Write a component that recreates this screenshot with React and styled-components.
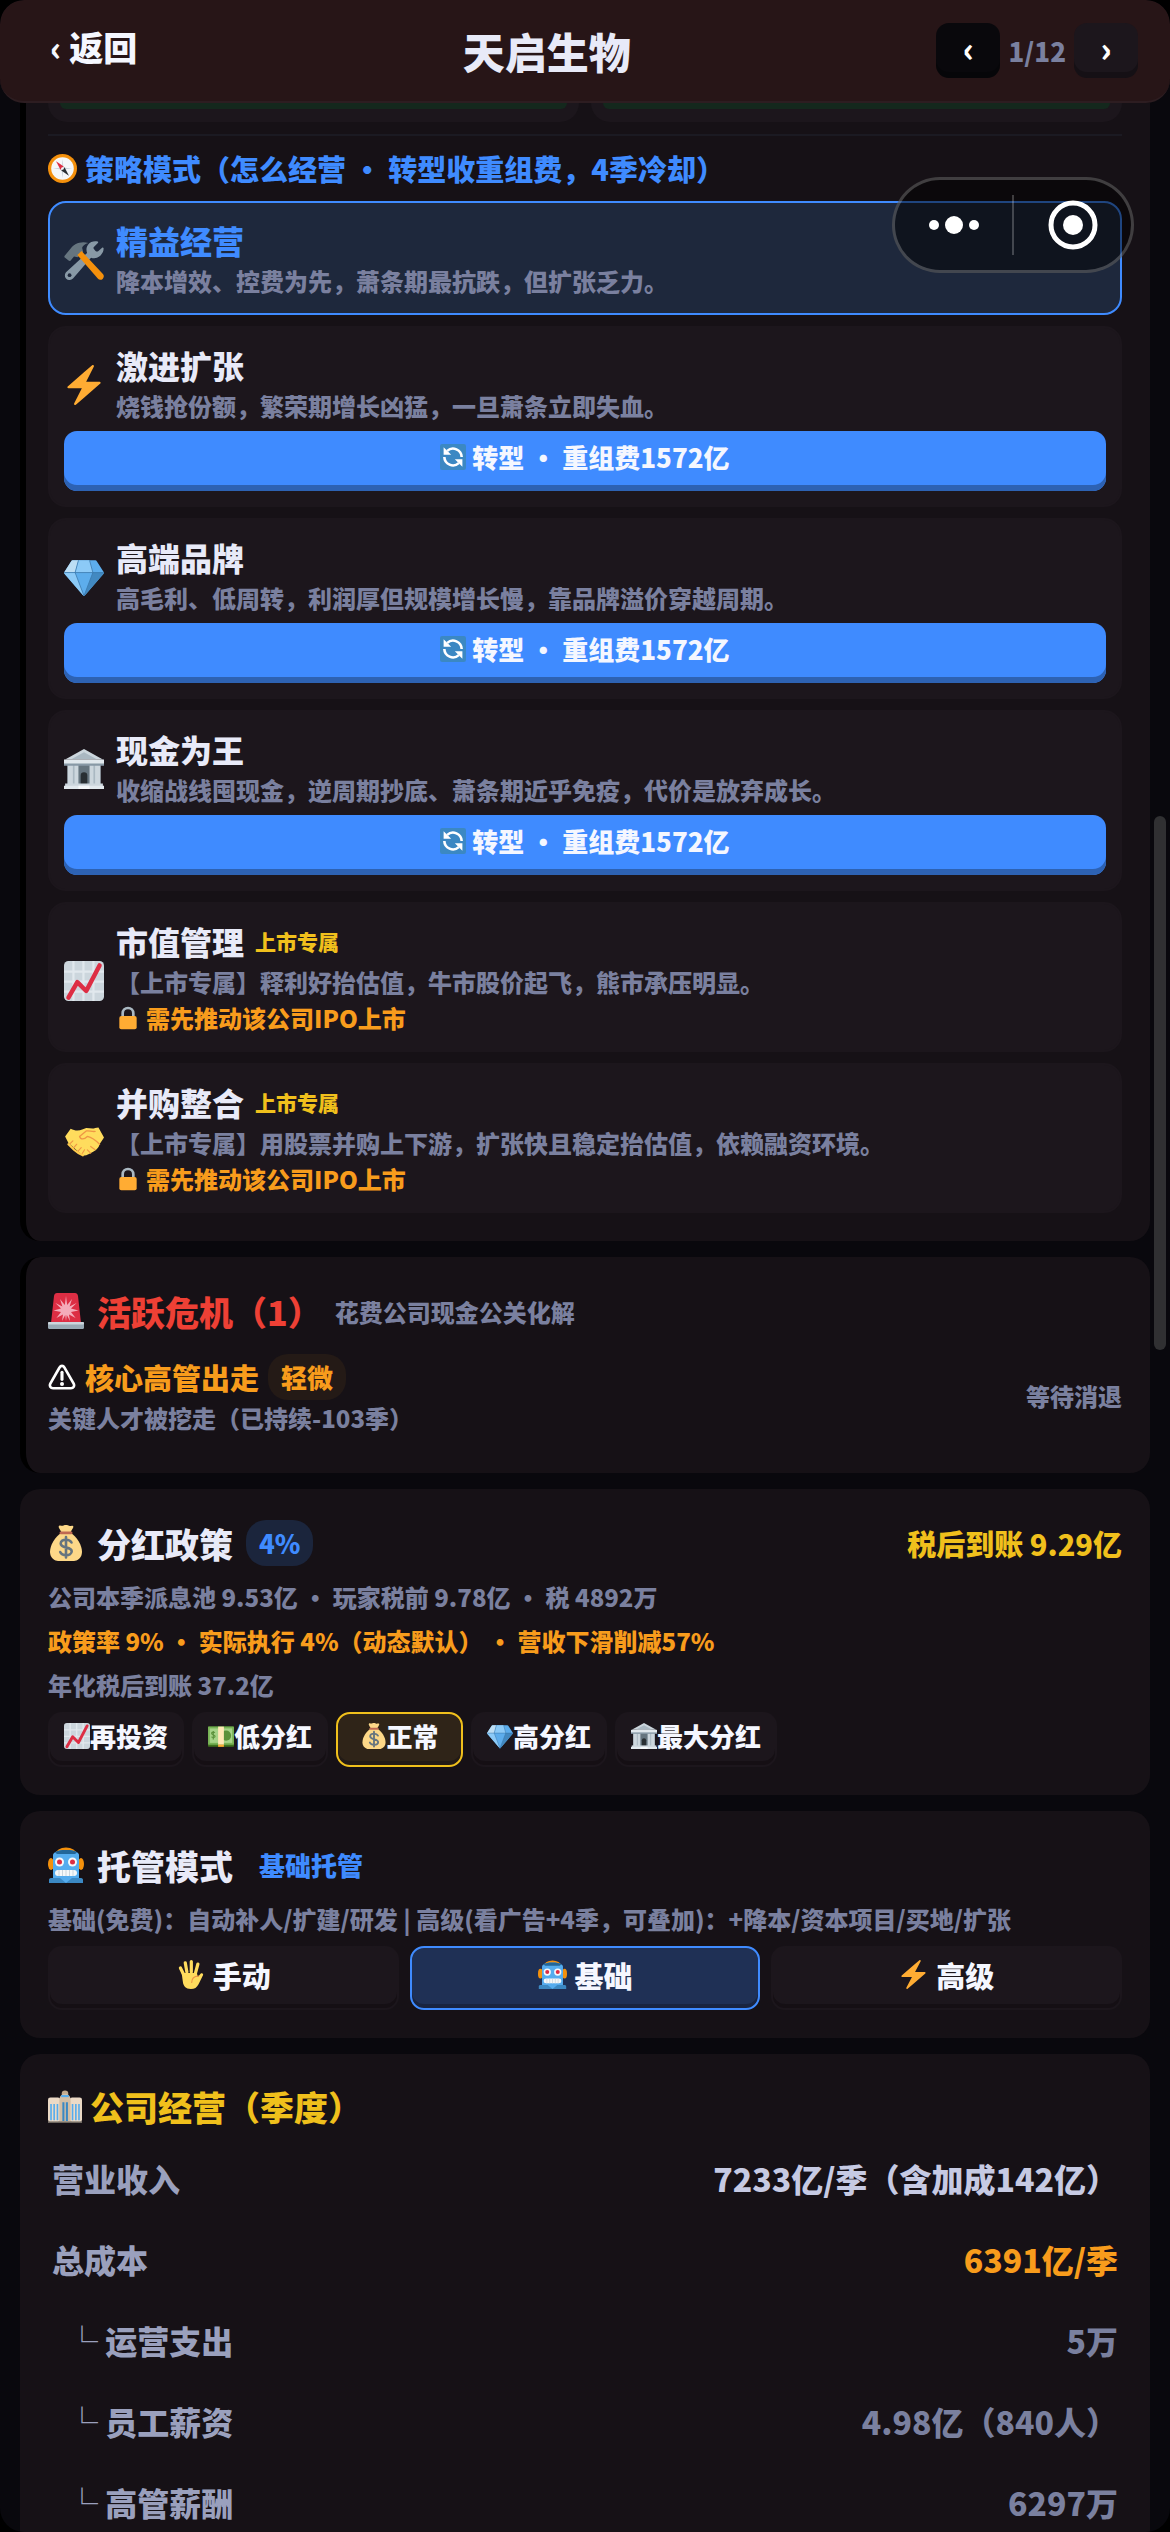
import React from "react";
import styled, { createGlobalStyle, css } from "styled-components";

const c = {
  page: "#09080d",
  card: "#161116",
  tile: "#1c161c",
  text: "#e8eaf8",
  label: "#9aa0bd",
  value: "#c6cae3",
  muted: "#7a809f",
  blue: "#3f8bff",
  orange: "#f89c1c",
  yellow: "#f0c01c",
  red: "#ee4035",
};

const Global = createGlobalStyle`
  *, *::before, *::after { box-sizing: border-box; }
  body {
    margin: 0;
    background: #000;
    color: ${c.text};
    font-family: "Noto Sans CJK SC", "Noto Sans CJK TC", sans-serif;
    font-weight: 900;
  }
  h1, h2, h3, p, dl, dd, ul { margin: 0; padding: 0; font-size: inherit; font-weight: inherit; }
  ul { list-style: none; }
  button { font: inherit; color: inherit; border: 0; margin: 0; padding: 0; cursor: pointer; }
`;

/* ---------- icons ---------- */

const Svg = styled.svg`
  display: block;
  flex: none;
  width: ${(p) => p.$size}px;
  height: ${(p) => p.$size}px;
`;

const drawings = {
  compass: (
    <>
      <circle cx="18" cy="18" r="18" fill="#f4900c" />
      <circle cx="18" cy="18" r="14" fill="#f5f8fa" />
      <path d="M18 6l1.200 10.800L30 18l-10.800 1.200L18 30l-1.200-10.800L6 18l10.800-1.200z" fill="#ccd6dd" />
      <path d="M10 9l9.500 6.500-4 4z" fill="#dd2e44" />
      <path d="M26 27l-9.500-6.500 4-4z" fill="#292f33" />
      <circle cx="18" cy="18" r="1.600" fill="#f5f8fa" />
    </>
  ),
  tools: (
    <>
      <path d="M35.6 7.2c-.2-.6-.9-.7-1.300-.3l-3.600 3.200c-.6.500-1.700.400-2.300-.2l-1.500-1.700c-.5-.6-.5-1.600.2-2.200L30.500 2.700c.5-.4.400-1.100-.2-1.300-3-.9-6.500.1-8.500 2.600-1.800 2.200-2 5.100-1 7.600L2.300 28.600C.4 30.300.3 33.100 2 34.800c1.700 1.700 4.400 1.600 6.100-.2L24.300 15.900c2.600.9 5.500.6 7.700-1.200 2.500-1.900 3.900-4.700 3.600-7.500z" fill="#8899a6" />
      <circle cx="5" cy="31.700" r="1.700" fill="#1e283c" />
      <path d="M.6 14.200L6 7.600C9 3.700 14.500.6 22 2.600c-3.200.8-5 2.400-5.700 4.400l1 4-5 4.600-3.300-.8-3 3.600c-.6.6-1.300.6-1.900.1l-3.400-2.700c-.5-.4-.5-1-.1-1.600z" fill="#66757f" />
      <path d="M12 13.500L15.800 10 35 30.600c1.200 1.300 1.100 3.300-.2 4.400s-3.300 1-4.400-.3z" fill="#f4900c" />
    </>
  ),
  zap: (
    <path
      d="M32.938 15.651C32.792 15.26 32.418 15 32 15H19.925L26.89 1.458c.219-.426.106-.947-.271-1.243C26.437.071 26.218 0 26 0c-.233 0-.466.082-.653.243L18 6.588 3.347 19.243c-.316.273-.43.714-.284 1.105S3.582 21 4 21h12.075L9.11 34.542c-.219.426-.106.947.271 1.243.182.144.401.215.619.215.233 0 .466-.082.653-.243L18 29.412l14.653-12.655c.317-.273.43-.714.285-1.106z"
      fill="#ffac33"
    />
  ),
  gem: (
    <>
      <path d="M.3 13.500L6.500 3.800C6.800 3.300 7.200 3 7.800 3h20.400c.6 0 1 .3 1.300.8l6.200 9.700c.3.500.3 1-.1 1.500L18.700 34.600c-.4.500-1 .5-1.400 0L.4 15c-.4-.5-.4-1-.1-1.500z" fill="#5dadec" />
      <path d="M.1 14L6.500 3.800C6.800 3.300 7.200 3 7.800 3H13l-3 11z" fill="#bddef4" />
      <path d="M13 3h10l3 11H10z" fill="#8ccaf7" />
      <path d="M.1 14H10l8 21c-.3 0-.5-.2-.7-.4L.4 15z" fill="#8ccaf7" />
      <path d="M35.900 14H26l-8 21c.3 0 .5-.2.700-.4L35.600 15z" fill="#4289c1" />
      <path d="M.2 14h35.600M13 3l-3 11 8 21 8-21-3-11" fill="none" stroke="#3a78ab" strokeWidth=".7" />
    </>
  ),
  bank: (
    <>
      <path d="M3 13h30v19H3z" fill="#aab8c2" />
      <path d="M12.500 14h11v18h-11z" fill="#66757f" />
      <path d="M15 32v-8a3 3 0 0 1 6 0v8z" fill="#292f33" />
      <path d="M3.500 14H8v18H3.500zM9.500 14H13v18H9.500zM23 14h3.500v18H23zM28 14h4.500v18H28z" fill="#ccd6dd" />
      <path d="M18 0l17 9.500H1z" fill="#ccd6dd" />
      <path d="M18 3l11 6H7z" fill="#aab8c2" />
      <path d="M0 9.500h36v4.500H0z" fill="#e1e8ed" />
      <path d="M0 13h36v2H0z" fill="#8899a6" />
      <path d="M1 31h34v2.500H1z" fill="#ccd6dd" />
      <path d="M0 33h36v3H0z" fill="#e1e8ed" />
      <path d="M13 33h10v3H13z" fill="#f5f8fa" />
    </>
  ),
  chart: (
    <>
      <rect width="36" height="36" rx="4" fill="#ccd6dd" />
      <path d="M8.500 0v36M17.500 0v36M26.500 0v36M0 9.500h36M0 18.500h36M0 27.500h36" stroke="#e1e8ed" strokeWidth="2" />
      <path d="M4 33l8-14 8 8L32 4" fill="none" stroke="#dd2e44" strokeWidth="4" strokeLinecap="round" strokeLinejoin="round" />
    </>
  ),
  handshake: (
    <>
      <path d="M1 13l5-7c4 2 7 2 11 .5l3-1c3 0 6 1 8 0l3-.5 5 9-4 6c-1 5-6 7-10 9-3 1.500-5 1.500-7-.500L4 19z" fill="#ffdc5d" />
      <path d="M14 13l6-5c3-.5 5 1 8 .5M14 13c1 3 4 3 7 0 4 1 8 4 11 7" fill="none" stroke="#ef9645" strokeWidth="1.200" strokeLinecap="round" strokeLinejoin="round" />
      <path d="M5 20l3-3M8 24l3.500-4M12 27l3.500-4M16 29l2.500-4M24 22l4 3M21 25l3 3" stroke="#ef9645" strokeWidth="1" strokeLinecap="round" />
      <path d="M4 20l5 5 4 3 4 2" fill="none" stroke="#ffcc4d" strokeWidth="2" strokeLinecap="round" />
    </>
  ),
  lock: (
    <>
      <path d="M10 17v-6a8 8 0 0 1 16 0v6" fill="none" stroke="#aab8c2" strokeWidth="4" />
      <rect x="5" y="15" width="26" height="20" rx="3" fill="#ffac33" />
    </>
  ),
  siren: (
    <>
      <path d="M6 3c.2-2 1.500-3 3-3h18c1.500 0 2.800 1 3 3l3 27H3z" fill="#dd2e44" />
      <path d="M18 3l1.200 9L24 6l-2.400 7.500 7-3.500-5.600 5.600 7.500 1.900-7.500 1.500 4.600 6-6.600-3.500L22 28l-3.200-6L18 28l-.8-6L14 28l1-6.500L8.400 25l4.600-6-7.500-1.500 7.500-1.900L7.400 10l7 3.500L12 6l4.800 6z" fill="#f4abba" />
      <rect y="29" width="36" height="7" rx="1.500" fill="#99aab5" />
      <rect y="29" width="36" height="2.500" rx="1" fill="#ccd6dd" />
    </>
  ),
  warning: (
    <>
      <path d="M15 5.500c1.300-2.300 4.700-2.300 6 0l12 21c1.500 3-.3 6-3.500 6h-23c-3.200 0-5-3-3.500-6z" fill="none" stroke="#fff" strokeWidth="3.400" />
      <path d="M18 12v9" stroke="#fff" strokeWidth="4" strokeLinecap="round" />
      <circle cx="18" cy="27" r="2.600" fill="#fff" />
    </>
  ),
  moneybag: (
    <>
      <path d="M11 1c1-1.500 3 .5 4.500-.5C17-.4 19-.3 20.500.6 22 1.500 24 0 25 1c1.500 1-2.500 5-3 8h-8c-.5-3-4.500-7-3-8z" fill="#fdd888" />
      <path d="M13 8h10c6 4 11 12 11 19 0 6-5 9-8 9H10c-3 0-8-3-8-9 0-7 5-15 11-19z" fill="#fdd888" />
      <rect x="11.500" y="6.500" width="13" height="2.800" rx="1.400" fill="#bf6952" />
      <path d="M23.500 17.500c-1-2-3-2.800-5.500-2.800-3 0-5.300 1.300-5.300 3.800 0 5.500 11 2.800 11 7.800 0 2.500-2.500 3.900-5.500 3.900-2.700 0-5-.9-6-3.200M18 12v20.500" fill="none" stroke="#67757f" strokeWidth="2.600" strokeLinecap="round" />
    </>
  ),
  banknote: (
    <>
      <rect y="5" width="36" height="28" rx="1" fill="#3e721d" />
      <rect y="5" width="36" height="25" rx="1" fill="#77b255" />
      <rect x="2.500" y="7.500" width="31" height="20" fill="#a6d388" />
      <circle cx="25" cy="17.500" r="7" fill="#5c913b" />
      <path d="M9.500 13.500c-1-1.300-4.500-1.400-4.500.7 0 2.600 4.800 1.400 4.800 4.200 0 2.200-3.800 2.200-5 .6M7.300 11v12" fill="none" stroke="#5c913b" strokeWidth="1.600" />
      <path d="M14 5h8v25h-8z" fill="#ffe8b6" />
      <path d="M14 30h8v3h-8z" fill="#ffac33" />
    </>
  ),
  robot: (
    <>
      <ellipse cx="18" cy="7" rx="10.500" ry="6.500" fill="#f4900c" />
      <ellipse cx="3" cy="17" rx="3" ry="6" fill="#f4900c" />
      <ellipse cx="33" cy="17" rx="3" ry="6" fill="#f4900c" />
      <path d="M5 8c0-3 6-5 13-5s13 2 13 5v23H5z" fill="#55acee" />
      <path d="M7 5.500C9 3.500 13 3 18 3s9 .5 11 2.500L27 7H9z" fill="#226699" />
      <path d="M1 33c0-1.500 1-2 3-2h28c2 0 3 .5 3 2v3H1z" fill="#3b88c3" />
      <path d="M12 31h12l-6 5z" fill="#55acee" />
      <circle cx="11.500" cy="15" r="4.500" fill="#f5f8fa" />
      <circle cx="24.500" cy="15" r="4.500" fill="#f5f8fa" />
      <circle cx="11.500" cy="15" r="2.500" fill="#dd2e44" />
      <circle cx="24.500" cy="15" r="2.500" fill="#dd2e44" />
      <rect x="7" y="23" width="22" height="6" rx="3" fill="#f5f8fa" />
      <path d="M11 23v6M14.500 23v6M18 23v6M21.500 23v6M25 23v6" stroke="#ccd6dd" strokeWidth="1" />
    </>
  ),
  hand: (
    <>
      <path d="M9 17L5.500 10M13.500 15L11.500 3.500M19 15V2M24 17l3.200-12" stroke="#ffdc5d" strokeWidth="4" strokeLinecap="round" />
      <path d="M7 16h19l1 5 3.500-4c1.500-1.500 4 0 3 2L28 30c-2 4-5 6-9.500 6C12 36 9 32 8.500 27z" fill="#ffdc5d" />
      <path d="M28 20c-5 0-8.500 3-8.500 8" fill="none" stroke="#ef9645" strokeWidth="1.400" strokeLinecap="round" />
    </>
  ),
  refresh: (
    <>
      <rect width="36" height="36" rx="3" fill="#3b88c3" />
      <path d="M10 9.500a12 12 0 0 1 20 8.500M26 26.500A12 12 0 0 1 6 18" fill="none" stroke="#fff" strokeWidth="3.600" />
      <path d="M5 4.500v10.500h10.500zM31 31.500V21H20.500z" fill="#fff" />
    </>
  ),
  city: (
    <>
      <circle cx="18" cy="5" r="3.500" fill="#c1a98e" />
      <rect x="0" y="9" width="13" height="26" rx="2.500" fill="#ecdac6" />
      <rect x="23" y="9" width="13" height="26" rx="2.500" fill="#ecdac6" />
      <path d="M12 35V13c0-6 2.500-8 6-8s6 2 6 8v22z" fill="#d3bea5" />
      <path d="M14 7.500h8" stroke="#55acee" strokeWidth="2.200" />
      <path d="M3.200 16v17M6.500 16v17M10 16v17M26 16v17M29.500 16v17M32.800 16v17" stroke="#55acee" strokeWidth="1.700" />
      <path d="M16.300 14v20M20 14v20" stroke="#3b88c3" strokeWidth="2.200" />
      <path d="M0 35h36" stroke="#8b8378" strokeWidth="1.500" />
    </>
  ),
};

const Icon = ({ name, size }) => (
  <Svg $size={size} viewBox="0 0 36 36" aria-hidden="true">
    {drawings[name]}
  </Svg>
);

/* ---------- shell ---------- */

const Shell = styled.div`
  position: relative;
  display: flex;
  flex-direction: column;
  height: 100vh;
  overflow: hidden;
  border-radius: 24px;
  background: ${c.page};
`;

const Header = styled.header`
  flex: none;
  display: flex;
  align-items: center;
  justify-content: space-between;
  padding: 23px 32px;
  border-bottom: 2px solid #2d1d21;
  border-radius: 24px;
  background: #271517;
`;

const BackButton = styled.button`
  height: 55px;
  padding: 0 20px 8px 18px;
  background: none;
  color: #f5f7ff;
  font-size: 34px;
  line-height: 47px;
`;

const Title = styled.h1`
  font-size: 42px;
  line-height: 55px;
`;

const Pager = styled.nav`
  display: flex;
  align-items: center;
  gap: 8px;
  color: ${c.muted};
  font-size: 26px;
  line-height: 40px;
`;

const PagerButton = styled.button`
  width: 64px;
  height: 55px;
  padding-bottom: 6px;
  border-radius: 13px;
  background: ${(p) => (p.$dim ? "#09080c" : c.tile)};
  box-shadow: inset 0 -6px 0 rgba(0, 0, 0, 0.25);
  color: #fff;
  font-size: 34px;
  line-height: 48px;
`;

const Main = styled.main`
  flex: 1;
  min-height: 0;
  display: flex;
  flex-direction: column;
  gap: 16px;
  padding: 0 20px;
  overflow-y: auto;
  scrollbar-width: none;
`;

const Card = styled.section`
  flex: none;
  padding: 28px;
  border-radius: 20px;
  background: ${c.card};
  ${(p) => p.$edge && css`
    padding-left: 22px;
    border-left: 6px solid #000;
  `}
  ${(p) => p.$continued && css`
    padding-top: 0;
    border-top-left-radius: 0;
    border-top-right-radius: 0;
  `}
`;

/* ---------- strategy ---------- */

const Stubs = styled.div`
  display: grid;
  grid-template-columns: 1fr 1fr;
  gap: 12px;
  padding-bottom: 12px;
  border-bottom: 2px solid #1b1a22;
`;

const Stub = styled.div`
  height: 19px;
  padding: 0 12px;
  border-radius: 0 0 20px 20px;
  background: ${c.tile};
  &::before {
    content: "";
    display: block;
    height: 6px;
    border-radius: 0 0 12px 12px;
    background: #14281d;
  }
`;

const SectionTitle = styled.h2`
  display: flex;
  align-items: center;
  gap: 8px;
  padding: 10px 0 11px;
  color: ${c.blue};
  font-size: 29px;
  line-height: 44px;
`;

const StrategyList = styled.ul`
  display: flex;
  flex-direction: column;
  gap: 11px;
`;

const Strategy = styled.li`
  padding: 14px;
  border: 2px solid ${(p) => (p.$active ? c.blue : c.tile)};
  border-radius: 18px;
  background: ${(p) => (p.$active ? "#1e283c" : c.tile)};
`;

const StrategyHead = styled.div`
  display: flex;
  align-items: center;
  gap: 12px;
  & > svg {
    margin-top: ${(p) => (p.$locked ? 8 : 4)}px;
  }
`;

const StrategyName = styled.h3`
  display: flex;
  align-items: center;
  gap: 11px;
  color: ${(p) => (p.$active ? c.blue : c.text)};
  font-size: 32px;
  line-height: 46px;
`;

const Tag = styled.span`
  color: ${c.yellow};
  font-size: 21px;
`;

const Note = styled.p`
  color: ${(p) => p.$color || c.muted};
  font-size: 24px;
  line-height: ${(p) => (p.$loose ? 44 : 36)}px;
`;

const LockNote = styled(Note)`
  display: flex;
  align-items: center;
  gap: 6px;
`;

const SwitchButton = styled.button`
  display: flex;
  align-items: center;
  justify-content: center;
  gap: 6px;
  width: 100%;
  height: 60px;
  margin-top: 7px;
  padding-bottom: 8px;
  border-radius: 13px;
  background: ${c.blue};
  box-shadow: inset 0 -6px 0 #2d62b3;
  color: #f5f7ff;
  font-size: 26px;
  line-height: 52px;
`;

/* ---------- shared card pieces ---------- */

const Heading = styled.h2`
  display: flex;
  align-items: center;
  gap: ${(p) => (p.$tight ? 8 : 13)}px;
  height: ${(p) => (p.$tight ? 48 : 52)}px;
  margin-bottom: ${(p) => (p.$tight ? 8 : 6)}px;
  color: ${(p) => p.$color || c.text};
  font-size: 34px;
`;

const Aside = styled.span`
  color: ${c.muted};
  font-size: 24px;
`;

const Badge = styled.span`
  padding: 0 13px;
  border-radius: 20px;
  background: ${(p) => p.$bg || "none"};
  color: ${(p) => p.$color};
  font-size: 26px;
  line-height: 46px;
`;

const Amount = styled.span`
  margin-left: auto;
  color: ${c.yellow};
  font-size: 29px;
`;

const CrisisRow = styled.div`
  display: flex;
  align-items: center;
  justify-content: space-between;
  padding: 11px 0 9px;
`;

const CrisisName = styled.h3`
  display: flex;
  align-items: center;
  gap: 9px;
  color: ${c.orange};
  font-size: 29px;
  line-height: 46px;
`;

const Options = styled.div`
  display: flex;
  gap: 8px;
  margin-top: 5px;
`;

const optionColors = {
  plain: css`
    border-color: transparent;
    background: linear-gradient(${c.tile} 0 0) border-box;
    box-shadow: inset 0 -4px 0 #150f14;
  `,
  gold: css`
    border-color: ${c.yellow};
    background: #2f2418;
    box-shadow: inset 0 -4px 0 #231b16;
  `,
  blue: css`
    border-color: ${c.blue};
    background: #1f3055;
    box-shadow: inset 0 -4px 0 #192440;
  `,
};

const Option = styled.button`
  display: flex;
  align-items: center;
  justify-content: center;
  min-width: 127px;
  height: 55px;
  padding: 0 14px 7px;
  border: 2px solid;
  border-radius: 14px;
  color: #f5f7ff;
  font-size: 26px;
  line-height: 44px;
  ${(p) => optionColors[p.$tone || "plain"]}
`;

const Modes = styled(Options)`
  gap: 11px;
`;

const Mode = styled(Option)`
  flex: 1;
  gap: 8px;
  height: 64px;
  font-size: 29px;
`;

const Ledger = styled.dl`
  padding: 0 4px;
`;

const LedgerRow = styled.div`
  display: flex;
  justify-content: space-between;
  padding-left: ${(p) => (p.$child ? 14 : 0)}px;
  font-size: 32px;
  line-height: 81px;
`;

const Term = styled.dt`
  color: ${c.label};
`;

const Figure = styled.dd`
  color: ${(p) => p.$color || c.muted};
`;

/* ---------- overlays ---------- */

const Capsule = styled.div`
  position: absolute;
  top: 177px;
  right: 36px;
  display: grid;
  grid-template-columns: 1fr 2px 1fr;
  align-items: center;
  justify-items: center;
  width: 242px;
  height: 96px;
  border: 3px solid rgba(255, 255, 255, 0.22);
  border-radius: 48px;
  background: rgba(0, 0, 0, 0.5);
`;

const CapsuleButton = styled.button`
  background: none;
`;

const CapsuleLine = styled.span`
  width: 2px;
  height: 60px;
  background: rgba(255, 255, 255, 0.22);
`;

const CapsuleArt = styled.svg`
  display: block;
  width: 52px;
  height: 52px;
  fill: #fff;
`;

const ScrollThumb = styled.div`
  position: absolute;
  top: 816px;
  right: 4px;
  width: 12px;
  height: 534px;
  border-radius: 6px;
  background: #303032;
`;

/* ---------- data ---------- */

const strategies = [
  { icon: "tools", name: "精益经营", note: "降本增效、控费为先，萧条期最抗跌，但扩张乏力。", active: true },
  { icon: "zap", name: "激进扩张", note: "烧钱抢份额，繁荣期增长凶猛，一旦萧条立即失血。", cost: "1572亿" },
  { icon: "gem", name: "高端品牌", note: "高毛利、低周转，利润厚但规模增长慢，靠品牌溢价穿越周期。", cost: "1572亿" },
  { icon: "bank", name: "现金为王", note: "收缩战线囤现金，逆周期抄底、萧条期近乎免疫，代价是放弃成长。", cost: "1572亿" },
  { icon: "chart", name: "市值管理", note: "【上市专属】释利好抬估值，牛市股价起飞，熊市承压明显。", locked: true },
  { icon: "handshake", name: "并购整合", note: "【上市专属】用股票并购上下游，扩张快且稳定抬估值，依赖融资环境。", locked: true },
];

const dividends = [
  { icon: "chart", label: "再投资" },
  { icon: "banknote", label: "低分红" },
  { icon: "moneybag", label: "正常", tone: "gold" },
  { icon: "gem", label: "高分红" },
  { icon: "bank", label: "最大分红" },
];

const modes = [
  { icon: "hand", label: "手动" },
  { icon: "robot", label: "基础", tone: "blue" },
  { icon: "zap", label: "高级" },
];

const ledger = [
  { term: "营业收入", value: "7233亿/季（含加成142亿）", color: c.value },
  { term: "总成本", value: "6391亿/季", color: c.orange },
  { term: "└ 运营支出", value: "5万", child: true },
  { term: "└ 员工薪资", value: "4.98亿（840人）", child: true },
  { term: "└ 高管薪酬", value: "6297万", child: true },
];

export default function App() {
  return (
    <>
      <Global />
      <Shell lang="zh-CN">
        <Header>
          <BackButton type="button">‹ 返回</BackButton>
          <Title>天启生物</Title>
          <Pager aria-label="公司">
            <PagerButton type="button" $dim>‹</PagerButton>
            <span>1/12</span>
            <PagerButton type="button">›</PagerButton>
          </Pager>
        </Header>

        <Main>
          <Card $edge $continued>
            <Stubs>
              <Stub />
              <Stub />
            </Stubs>
            <SectionTitle>
              <Icon name="compass" size={29} />
              策略模式（怎么经营 · 转型收重组费，4季冷却）
            </SectionTitle>
            <StrategyList>
              {strategies.map((s) => (
                <Strategy key={s.name} $active={s.active}>
                  <StrategyHead $locked={s.locked}>
                    <Icon name={s.icon} size={40} />
                    <div>
                      <StrategyName $active={s.active}>
                        {s.name}
                        {s.locked && <Tag>上市专属</Tag>}
                      </StrategyName>
                      <Note>{s.note}</Note>
                      {s.locked && (
                        <LockNote $color={c.orange}>
                          <Icon name="lock" size={24} />
                          需先推动该公司IPO上市
                        </LockNote>
                      )}
                    </div>
                  </StrategyHead>
                  {s.cost && (
                    <SwitchButton type="button">
                      <Icon name="refresh" size={26} />
                      转型 · 重组费{s.cost}
                    </SwitchButton>
                  )}
                </Strategy>
              ))}
            </StrategyList>
          </Card>

          <Card $edge>
            <Heading $color={c.red}>
              <Icon name="siren" size={36} />
              活跃危机（1）
              <Aside>花费公司现金公关化解</Aside>
            </Heading>
            <CrisisRow>
              <div>
                <CrisisName>
                  <Icon name="warning" size={28} />
                  核心高管出走
                  <Badge $bg="#241a16" $color={c.orange}>轻微</Badge>
                </CrisisName>
                <Note>关键人才被挖走（已持续-103季）</Note>
              </div>
              <Aside>等待消退</Aside>
            </CrisisRow>
          </Card>

          <Card>
            <Heading>
              <Icon name="moneybag" size={36} />
              分红政策
              <Badge $bg="#1b253c" $color={c.blue}>4%</Badge>
              <Amount>税后到账 9.29亿</Amount>
            </Heading>
            <Note $loose>公司本季派息池 9.53亿 · 玩家税前 9.78亿 · 税 4892万</Note>
            <Note $loose $color={c.orange}>政策率 9% · 实际执行 4%（动态默认） · 营收下滑削减57%</Note>
            <Note $loose>年化税后到账 37.2亿</Note>
            <Options>
              {dividends.map((d) => (
                <Option key={d.label} type="button" $tone={d.tone}>
                  <Icon name={d.icon} size={26} />
                  {d.label}
                </Option>
              ))}
            </Options>
          </Card>

          <Card>
            <Heading>
              <Icon name="robot" size={36} />
              托管模式
              <Badge $color={c.blue}>基础托管</Badge>
            </Heading>
            <Note $loose>基础(免费)：自动补人/扩建/研发 | 高级(看广告+4季，可叠加)：+降本/资本项目/买地/扩张</Note>
            <Modes>
              {modes.map((m) => (
                <Mode key={m.label} type="button" $tone={m.tone}>
                  <Icon name={m.icon} size={29} />
                  {m.label}
                </Mode>
              ))}
            </Modes>
          </Card>

          <Card>
            <Heading $tight $color={c.yellow}>
              <Icon name="city" size={34} />
              公司经营（季度）
            </Heading>
            <Ledger>
              {ledger.map((row) => (
                <LedgerRow key={row.term} $child={row.child}>
                  <Term>{row.term}</Term>
                  <Figure $color={row.color}>{row.value}</Figure>
                </LedgerRow>
              ))}
            </Ledger>
          </Card>
        </Main>

        <ScrollThumb />
        <Capsule>
          <CapsuleButton type="button" aria-label="更多">
            <CapsuleArt viewBox="0 0 52 52">
              <circle cx="6" cy="26" r="5" />
              <circle cx="26" cy="26" r="9" />
              <circle cx="46" cy="26" r="5" />
            </CapsuleArt>
          </CapsuleButton>
          <CapsuleLine />
          <CapsuleButton type="button" aria-label="关闭">
            <CapsuleArt viewBox="0 0 52 52">
              <circle cx="26" cy="26" r="22" fill="none" stroke="#fff" strokeWidth="5" />
              <circle cx="26" cy="26" r="10" />
            </CapsuleArt>
          </CapsuleButton>
        </Capsule>
      </Shell>
    </>
  );
}
